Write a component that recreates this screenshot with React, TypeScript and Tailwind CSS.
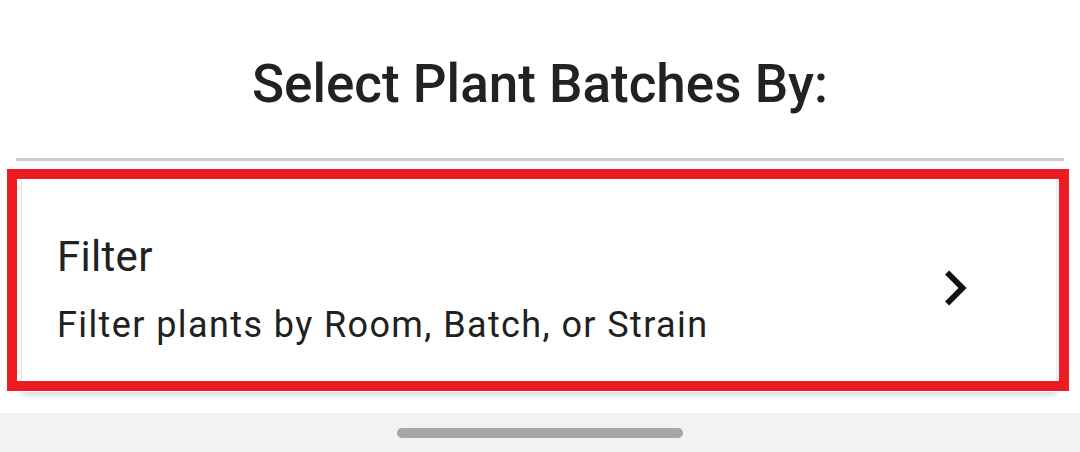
export default function App() {
  return (
    <main className="relative flex h-[452px] w-[1080px] flex-col bg-white font-['Roboto',_'Liberation_Sans',_sans-serif] text-[#212121]">
      <h1 className="pt-[52px] text-center text-[53px] font-medium leading-[64px] text-[#222]">
        Select Plant Batches By:
      </h1>
      <div className="mx-[16px] mt-[42px] h-[3px] bg-[#cbcbcb]" />

      <div className="mt-[11px] ml-[22px] mr-[24px] h-[220px] bg-white pt-[60px] pl-[35px] shadow-[0_3px_6px_rgba(0,0,0,0.16)] flex items-start">
        <div className="flex-1">
          <div className="text-[42px] leading-[50px] tracking-[0.3px]">Filter</div>
          <div className="mt-[21px] text-[36px] leading-[44px] tracking-[1.4px]">Filter plants by Room, Batch, or Strain</div>
        </div>
        <svg viewBox="0 0 24 24" className="mt-[21px] mr-[66px] h-[70px] w-[70px]" fill="#111">
          <path d="M10 6L8.59 7.41 13.17 12l-4.58 4.59L10 18l6-6z" />
        </svg>
      </div>

      {/* highlight box */}
      <div className="absolute left-[7px] top-[169px] h-[222px] w-[1062px] border-[10px] border-[#ec1c24]" />

      <div className="mt-auto flex h-[39px] items-center justify-center bg-[#f2f2f2]">
        <div className="h-[10px] w-[286px] rounded-full bg-[#a6a6a6]" />
      </div>
    </main>
  )
}
